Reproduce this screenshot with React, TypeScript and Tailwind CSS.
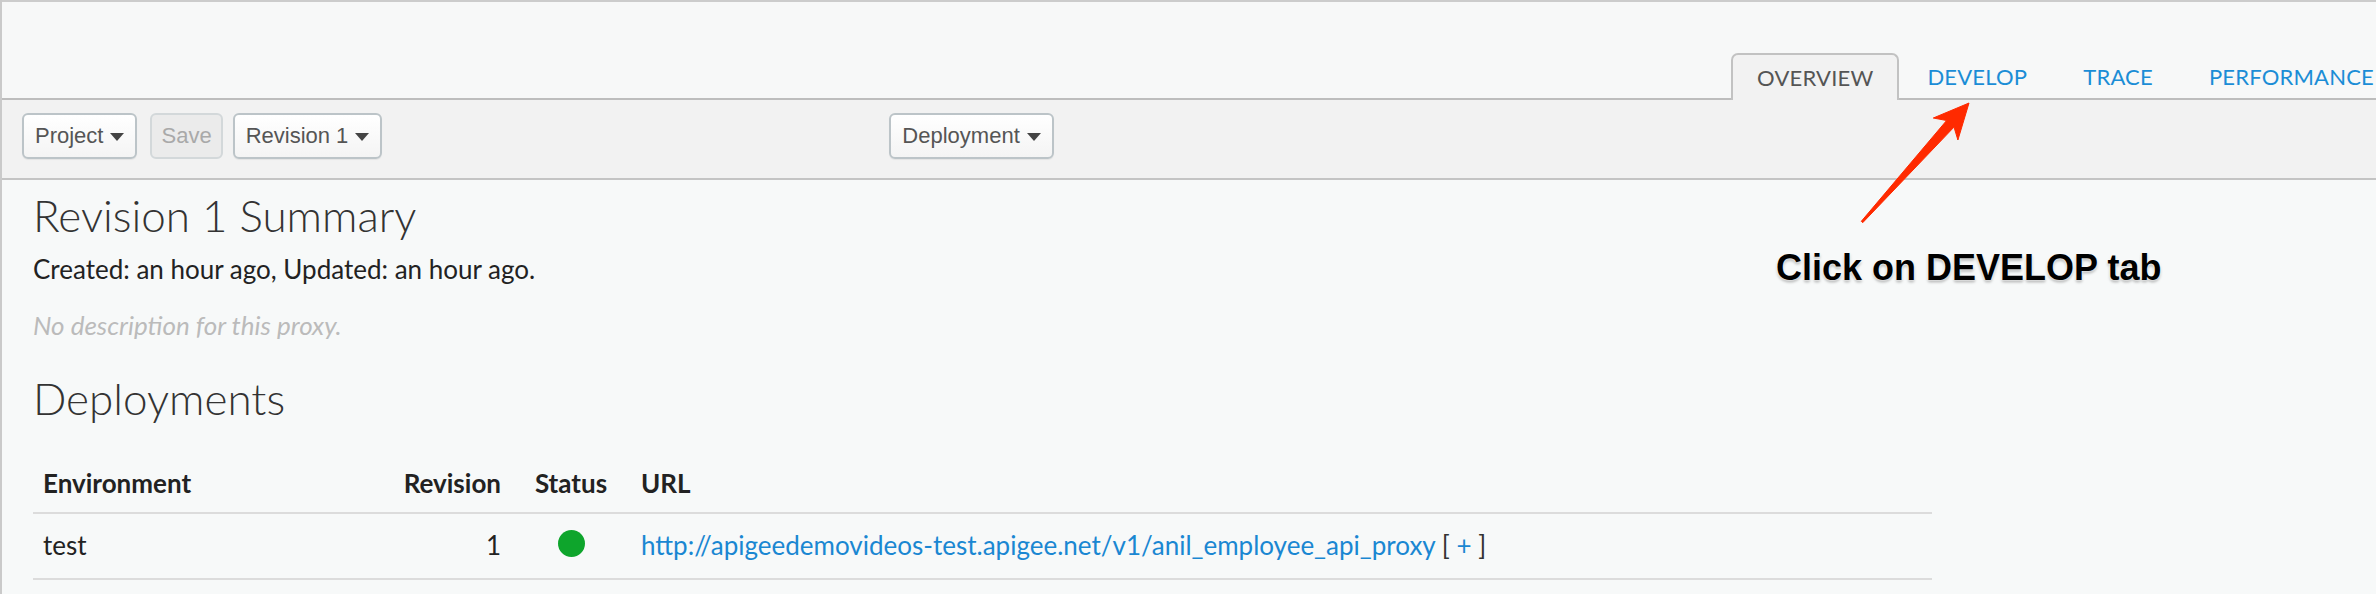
const TABS = ['OVERVIEW', 'DEVELOP', 'TRACE', 'PERFORMANCE'];

const URL = 'http://apigeedemovideos-test.apigee.net/v1/anil_employee_api_proxy';

function Caret() {
  return (
    <svg width="14" height="8" viewBox="0 0 14 8" className="ml-[7px] mt-[1px]">
      <path d="M0 0 L14 0 L7 8 Z" fill="#444" />
    </svg>
  );
}

function ToolButton({ label, caret = true, disabled = false }: { label: string; caret?: boolean; disabled?: boolean }) {
  return (
    <div
      className={
        disabled
          ? 'flex items-center h-[46px] px-[9px] rounded-[6px] border-2 border-[#d3d8da] bg-[#ebebeb] text-[#a9a9a9] text-[22px]'
          : 'flex items-center h-[46px] px-[11px] rounded-[6px] border-2 border-[#bcc4c8] bg-gradient-to-b from-white to-[#f4f4f4] text-[#555] text-[22px] shadow-[0_1px_1px_rgba(0,0,0,0.06)]'
      }
    >
      <span className="leading-none">{label}</span>
      {caret && <Caret />}
    </div>
  );
}

export default function App() {
  return (
    <div className="relative w-[2376px] h-[594px] overflow-hidden border-l-2 border-[#cacaca] bg-[#f7f9f9] font-['Lato',sans-serif]">
      {/* Tab header */}
      <div className="h-[100px] border-t-2 border-b-2 border-t-[#cccccc] border-b-[#bdbdbd] bg-[#f7f8f8] flex items-end justify-end">
        <div className="flex items-end -mb-[2px] -mr-[26px]">
          {TABS.map((t, i) =>
            i === 0 ? (
              <div
                key={t}
                className="h-[47px] px-[24px] flex items-center border-2 border-b-0 border-[#c2c2c2] rounded-t-[7px] bg-[#f2f2f2] text-[22px] text-[#555] tracking-[0.2px]"
              >
                {t}
              </div>
            ) : (
              <div key={t} className="h-[47px] px-[28px] flex items-center text-[22px] text-[#1b8dd6] tracking-[0.2px]">
                {t}
              </div>
            )
          )}
        </div>
      </div>

      {/* Toolbar */}
      <div className="h-[80px] border-b-2 border-[#c4c4c4] bg-[#f2f2f2] flex items-start pt-[13px] pl-[20px] font-['Liberation_Sans',Arial,sans-serif]">
        <ToolButton label="Project" />
        <div className="ml-[13px]">
          <ToolButton label="Save" caret={false} disabled />
        </div>
        <div className="ml-[10px]">
          <ToolButton label="Revision 1" />
        </div>
        <div className="ml-[507px]">
          <ToolButton label="Deployment" />
        </div>
      </div>

      {/* Content */}
      <div className="pl-[31px]">
        <h1 className="mt-[11px] text-[44px] leading-[48px] font-light text-[#333]">Revision 1 Summary</h1>
        <p className="mt-[15px] text-[26px] leading-[30px] text-[#222]">Created: an hour ago, Updated: an hour ago.</p>
        <p className="mt-[26px] text-[26px] leading-[30px] italic text-[#bbbbbb]">No description for this proxy.</p>
        <h2 className="mt-[36px] text-[44px] leading-[44px] font-light text-[#333]">Deployments</h2>

        <table className="mt-[38px] w-[1899px] border-collapse text-[26px] leading-[30px] text-[#222]">
          <thead>
            <tr className="border-b-2 border-[#dcdcdc]">
              <th className="w-[350px] pl-[10px] pt-[10px] pb-[14px] text-left font-bold">Environment</th>
              <th className="w-[128px] pr-[10px] pt-[10px] pb-[14px] text-right font-bold">Revision</th>
              <th className="w-[120px] pt-[10px] pb-[14px] text-center font-bold">Status</th>
              <th className="pl-[10px] pt-[10px] pb-[14px] text-left font-bold">URL</th>
            </tr>
          </thead>
          <tbody>
            <tr className="border-b-2 border-[#dcdcdc]">
              <td className="pl-[10px] pt-[16px] pb-[18px]">test</td>
              <td className="pr-[10px] pt-[16px] pb-[18px] text-right">1</td>
              <td className="pt-[16px] pb-[18px]">
                <div className="mx-auto w-[27px] h-[27px] rounded-full bg-[#0ea52c] -mt-[4px]" />
              </td>
              <td className="pl-[10px] pt-[16px] pb-[18px]">
                <span className="text-[#1a87d2]">{URL}</span>{' '}
                <span className="text-[#333]">[</span> <span className="text-[#1a87d2]">+</span>{' '}
                <span className="text-[#333]">]</span>
              </td>
            </tr>
          </tbody>
        </table>
      </div>

      {/* Annotation */}
      <svg className="absolute left-0 top-0 pointer-events-none" width="2376" height="594">
        <polygon
          points="1967,103 1955.9,140 1952,127.1 1860.7,222.7 1859.3,221.3 1944.6,120.5 1931.3,118"
          fill="#ff2a00"
          stroke="#ff2a00"
          strokeWidth="1"
          strokeLinejoin="round"
        />
      </svg>
      <div className="absolute left-[1774px] top-[250px] text-[36px] leading-[36px] font-bold text-black font-['Liberation_Sans',Arial,sans-serif] [text-shadow:0_0_2px_#fff,0_0_3px_#fff,0_2px_3px_rgba(0,0,0,0.35)] whitespace-nowrap">
        Click on DEVELOP tab
      </div>
    </div>
  );
}
